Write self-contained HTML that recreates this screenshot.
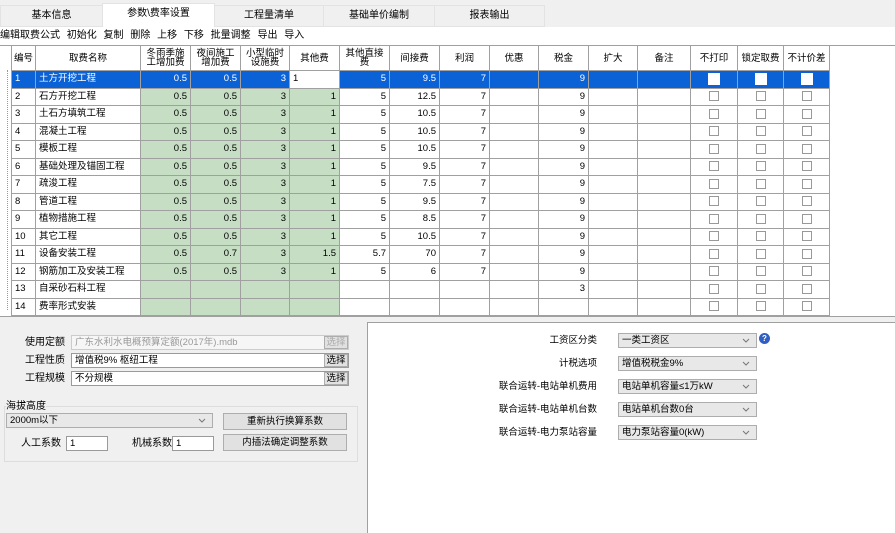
<!DOCTYPE html>
<html><head><meta charset="utf-8"><style>
body{margin:0;width:895px;height:532px;overflow:hidden;background:#fff;font-family:"Liberation Sans","Noto Sans CJK SC",sans-serif;font-size:10px;line-height:13px;color:#000;position:relative}
.a{position:absolute}
.tab{position:absolute;top:5px;height:20px;line-height:20px;text-align:center;background:#f0f0f0;border:1px solid #e3e3e3;font-size:10px}
table{border-collapse:collapse;table-layout:fixed;position:absolute;left:11px;top:45px}
td{border:1px solid #a0a0a0;height:16.5px;padding:0 3px;white-space:nowrap;overflow:hidden;font-size:9.5px;text-align:right;line-height:12px}
th{border:1px solid #a0a0a0;height:24px;font-weight:normal;font-size:9.5px;line-height:9px;padding:0;background:#fff}
td.l{text-align:left}
.g{background:#c6dfc4}
tr.s td{background:#0b62d6;color:#fff}
.cb{display:inline-block;width:8px;height:8px;border:1px solid #999;background:#fff;vertical-align:middle}
tr.s .cb{width:10px;height:10px;border-color:#fff}
td.c{text-align:center}
.in{position:absolute;height:15px;border:1px solid #9a9a9a;background:#fff;font-size:9.5px;line-height:13px;padding-left:3px;box-sizing:border-box}
.btn{position:absolute;border:1px solid #adadad;background:#e1e1e1;text-align:center;font-size:9.5px;box-sizing:border-box}
.sel{position:absolute;height:15px;border:1px solid #adadad;background:#e8e8e8;font-size:9.5px;line-height:13px;padding-left:3px;box-sizing:border-box;width:139px;left:618px}
.chev{position:absolute;right:6px;top:4px;width:8px;height:5px}
.lb{position:absolute;font-size:9.5px;text-align:right;width:180px;left:417px;line-height:13px}
</style></head><body>
<div class="a" style="left:0;top:0;width:895px;height:27px;background:#f0f0f0"></div>
<div class="tab" style="left:0;width:101px">基本信息</div>
<div class="tab" style="left:102px;width:111px;background:#fff;border-bottom-color:#fff;top:3px;height:23px">参数\费率设置</div>
<div class="tab" style="left:214px;width:108px">工程量清单</div>
<div class="tab" style="left:323px;width:110px">基础单价编制</div>
<div class="tab" style="left:434px;width:109px">报表输出</div>
<div class="a" style="left:0;top:27px;width:895px;height:18px;background:#fff;border-bottom:1px solid #a0a0a0;line-height:17px;font-size:10px;word-spacing:4px">编辑取费公式 初始化 复制 删除 上移 下移 批量调整 导出 导入</div>
<div class="a" style="left:7px;top:70px;height:240px;border-left:1px dotted #999"></div>
<table>
<colgroup><col style="width:24px"><col style="width:105px"><col style="width:50px"><col style="width:50px"><col style="width:49px"><col style="width:50px"><col style="width:50px"><col style="width:50px"><col style="width:50px"><col style="width:49px"><col style="width:50px"><col style="width:49px"><col style="width:53px"><col style="width:47px"><col style="width:46px"><col style="width:46px"></colgroup>
<tr><th>编号</th><th>取费名称</th><th>冬雨季施<br>工增加费</th><th>夜间施工<br>增加费</th><th>小型临时<br>设施费</th><th>其他费</th><th>其他直接<br>费</th><th>间接费</th><th>利润</th><th>优惠</th><th>税金</th><th>扩大</th><th>备注</th><th>不打印</th><th>锁定取费</th><th>不计价差</th></tr>
<tr class="s"><td class="l">1</td><td class="l">土方开挖工程</td><td>0.5</td><td>0.5</td><td>3</td><td class="l" style="background:#fff;color:#000">1</td><td>5</td><td>9.5</td><td>7</td><td></td><td>9</td><td></td><td></td><td class="c"><span class="cb"></span></td><td class="c"><span class="cb"></span></td><td class="c"><span class="cb"></span></td></tr>
<tr><td class="l">2</td><td class="l">石方开挖工程</td><td class="g">0.5</td><td class="g">0.5</td><td class="g">3</td><td class="g">1</td><td>5</td><td>12.5</td><td>7</td><td></td><td>9</td><td></td><td></td><td class="c"><span class="cb"></span></td><td class="c"><span class="cb"></span></td><td class="c"><span class="cb"></span></td></tr>
<tr><td class="l">3</td><td class="l">土石方填筑工程</td><td class="g">0.5</td><td class="g">0.5</td><td class="g">3</td><td class="g">1</td><td>5</td><td>10.5</td><td>7</td><td></td><td>9</td><td></td><td></td><td class="c"><span class="cb"></span></td><td class="c"><span class="cb"></span></td><td class="c"><span class="cb"></span></td></tr>
<tr><td class="l">4</td><td class="l">混凝土工程</td><td class="g">0.5</td><td class="g">0.5</td><td class="g">3</td><td class="g">1</td><td>5</td><td>10.5</td><td>7</td><td></td><td>9</td><td></td><td></td><td class="c"><span class="cb"></span></td><td class="c"><span class="cb"></span></td><td class="c"><span class="cb"></span></td></tr>
<tr><td class="l">5</td><td class="l">模板工程</td><td class="g">0.5</td><td class="g">0.5</td><td class="g">3</td><td class="g">1</td><td>5</td><td>10.5</td><td>7</td><td></td><td>9</td><td></td><td></td><td class="c"><span class="cb"></span></td><td class="c"><span class="cb"></span></td><td class="c"><span class="cb"></span></td></tr>
<tr><td class="l">6</td><td class="l">基础处理及锚固工程</td><td class="g">0.5</td><td class="g">0.5</td><td class="g">3</td><td class="g">1</td><td>5</td><td>9.5</td><td>7</td><td></td><td>9</td><td></td><td></td><td class="c"><span class="cb"></span></td><td class="c"><span class="cb"></span></td><td class="c"><span class="cb"></span></td></tr>
<tr><td class="l">7</td><td class="l">疏浚工程</td><td class="g">0.5</td><td class="g">0.5</td><td class="g">3</td><td class="g">1</td><td>5</td><td>7.5</td><td>7</td><td></td><td>9</td><td></td><td></td><td class="c"><span class="cb"></span></td><td class="c"><span class="cb"></span></td><td class="c"><span class="cb"></span></td></tr>
<tr><td class="l">8</td><td class="l">管道工程</td><td class="g">0.5</td><td class="g">0.5</td><td class="g">3</td><td class="g">1</td><td>5</td><td>9.5</td><td>7</td><td></td><td>9</td><td></td><td></td><td class="c"><span class="cb"></span></td><td class="c"><span class="cb"></span></td><td class="c"><span class="cb"></span></td></tr>
<tr><td class="l">9</td><td class="l">植物措施工程</td><td class="g">0.5</td><td class="g">0.5</td><td class="g">3</td><td class="g">1</td><td>5</td><td>8.5</td><td>7</td><td></td><td>9</td><td></td><td></td><td class="c"><span class="cb"></span></td><td class="c"><span class="cb"></span></td><td class="c"><span class="cb"></span></td></tr>
<tr><td class="l">10</td><td class="l">其它工程</td><td class="g">0.5</td><td class="g">0.5</td><td class="g">3</td><td class="g">1</td><td>5</td><td>10.5</td><td>7</td><td></td><td>9</td><td></td><td></td><td class="c"><span class="cb"></span></td><td class="c"><span class="cb"></span></td><td class="c"><span class="cb"></span></td></tr>
<tr><td class="l">11</td><td class="l">设备安装工程</td><td class="g">0.5</td><td class="g">0.7</td><td class="g">3</td><td class="g">1.5</td><td>5.7</td><td>70</td><td>7</td><td></td><td>9</td><td></td><td></td><td class="c"><span class="cb"></span></td><td class="c"><span class="cb"></span></td><td class="c"><span class="cb"></span></td></tr>
<tr><td class="l">12</td><td class="l">钢筋加工及安装工程</td><td class="g">0.5</td><td class="g">0.5</td><td class="g">3</td><td class="g">1</td><td>5</td><td>6</td><td>7</td><td></td><td>9</td><td></td><td></td><td class="c"><span class="cb"></span></td><td class="c"><span class="cb"></span></td><td class="c"><span class="cb"></span></td></tr>
<tr><td class="l">13</td><td class="l">自采砂石料工程</td><td class="g"></td><td class="g"></td><td class="g"></td><td class="g"></td><td></td><td></td><td></td><td></td><td>3</td><td></td><td></td><td class="c"><span class="cb"></span></td><td class="c"><span class="cb"></span></td><td class="c"><span class="cb"></span></td></tr>
<tr><td class="l">14</td><td class="l">费率形式安装</td><td class="g"></td><td class="g"></td><td class="g"></td><td class="g"></td><td></td><td></td><td></td><td></td><td></td><td></td><td></td><td class="c"><span class="cb"></span></td><td class="c"><span class="cb"></span></td><td class="c"><span class="cb"></span></td></tr>
</table>
<div class="a" style="left:0;top:316px;width:895px;height:216px;background:#f0f0f0;border-top:1px solid #a0a0a0"></div>
<div class="a" style="left:367px;top:322px;width:528px;height:210px;background:#fff;border-left:1px solid #a0a0a0;border-top:1px solid #a0a0a0"></div>
<div class="a" style="left:25px;top:336px">使用定额</div>
<div class="in" style="left:71px;top:335px;width:278px;color:#999;background:#f6f6f6;border-color:#ccc">广东水利水电概预算定额(2017年).mdb</div>
<div class="btn" style="left:324px;top:336px;width:24px;height:13px;line-height:11px;color:#aaa">选择</div>
<div class="a" style="left:25px;top:354px">工程性质</div>
<div class="in" style="left:71px;top:353px;width:278px">增值税9% 枢纽工程</div>
<div class="btn" style="left:324px;top:354px;width:24px;height:13px;line-height:11px">选择</div>
<div class="a" style="left:25px;top:372px">工程规模</div>
<div class="in" style="left:71px;top:371px;width:278px">不分规模</div>
<div class="btn" style="left:324px;top:372px;width:24px;height:13px;line-height:11px">选择</div>
<div class="a" style="left:4px;top:406px;width:352px;height:54px;border:1px solid #ddd"></div>
<div class="a" style="left:6px;top:400px;background:#f0f0f0">海拔高度</div>
<div class="a" style="left:6px;top:413px;width:207px;height:15px;border:1px solid #adadad;background:#e8e8e8;line-height:13px;font-size:9.5px;padding-left:3px;box-sizing:border-box">2000m以下<svg class="chev" viewBox="0 0 8 5"><path d="M1 1L4 4L7 1" fill="none" stroke="#777"/></svg></div>
<div class="btn" style="left:223px;top:413px;width:124px;height:17px;line-height:15px">重新执行换算系数</div>
<div class="a" style="left:21px;top:437px">人工系数</div>
<div class="in" style="left:66px;top:436px;width:42px">1</div>
<div class="a" style="left:132px;top:437px">机械系数</div>
<div class="in" style="left:172px;top:436px;width:42px">1</div>
<div class="btn" style="left:223px;top:434px;width:124px;height:17px;line-height:15px">内插法确定调整系数</div>
<div class="lb" style="top:334px">工资区分类</div>
<div class="sel" style="top:333px">一类工资区<svg class="chev" viewBox="0 0 8 5"><path d="M1 1L4 4L7 1" fill="none" stroke="#777"/></svg></div>
<div class="a" style="left:759px;top:333px;width:11px;height:11px;border-radius:50%;background:#2f5fc4;color:#fff;font-size:8px;line-height:11px;text-align:center;font-weight:bold">?</div>
<div class="lb" style="top:357px">计税选项</div>
<div class="sel" style="top:356px">增值税税金9%<svg class="chev" viewBox="0 0 8 5"><path d="M1 1L4 4L7 1" fill="none" stroke="#777"/></svg></div>
<div class="lb" style="top:380px">联合运转-电站单机费用</div>
<div class="sel" style="top:379px">电站单机容量≤1万kW<svg class="chev" viewBox="0 0 8 5"><path d="M1 1L4 4L7 1" fill="none" stroke="#777"/></svg></div>
<div class="lb" style="top:403px">联合运转-电站单机台数</div>
<div class="sel" style="top:402px">电站单机台数0台<svg class="chev" viewBox="0 0 8 5"><path d="M1 1L4 4L7 1" fill="none" stroke="#777"/></svg></div>
<div class="lb" style="top:426px">联合运转-电力泵站容量</div>
<div class="sel" style="top:425px">电力泵站容量0(kW)<svg class="chev" viewBox="0 0 8 5"><path d="M1 1L4 4L7 1" fill="none" stroke="#777"/></svg></div>
</body></html>
